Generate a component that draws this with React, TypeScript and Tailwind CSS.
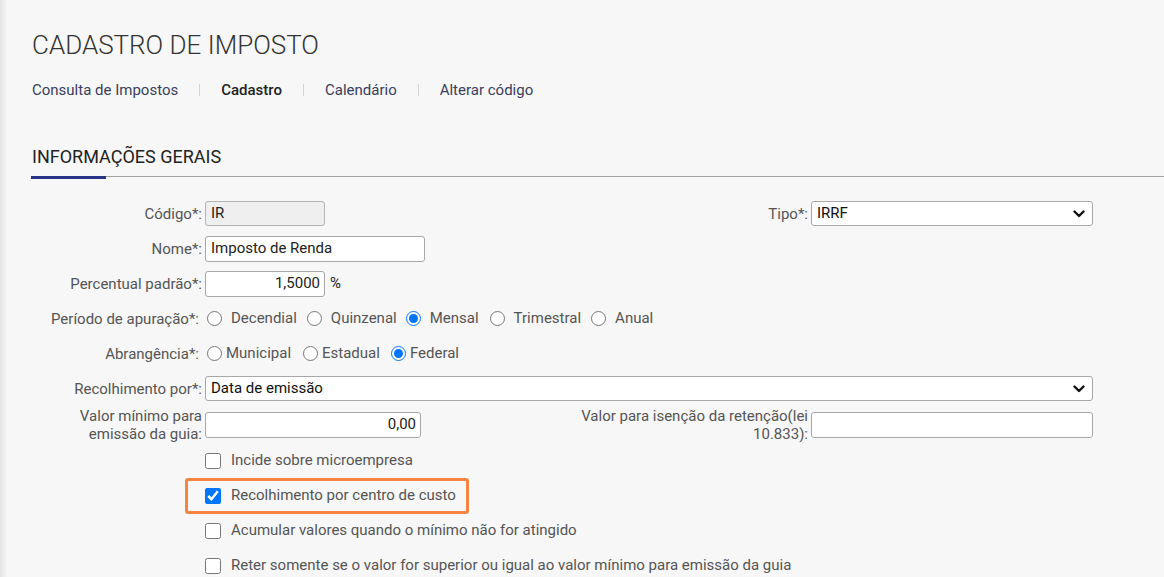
import React from "react";

function Chevron() {
  return (
    <svg width="12" height="8" viewBox="0 0 12 8" className="absolute right-[7px] top-1/2 -translate-y-1/2">
      <polyline points="1.5,1.5 6,6 10.5,1.5" fill="none" stroke="#111" strokeWidth="2.4" strokeLinecap="round" strokeLinejoin="round" />
    </svg>
  );
}

function Select({ value, width }: { value: string; width: string }) {
  return (
    <div className={`relative h-[25px] ${width} bg-white border border-[#a8a8a8] rounded-[3px] flex items-center pl-[5px] text-[#111]`}>
      {value}
      <Chevron />
    </div>
  );
}

function Label({ children, width = "w-[173px]" }: { children: React.ReactNode; width?: string }) {
  return <div className={`${width} shrink-0 pr-[3px] text-right text-[#555] leading-[18px]`}>{children}</div>;
}

function Radio({ label, checked, name, textGap, after }: { label: string; checked?: boolean; name: string; textGap: string; after: string }) {
  return (
    <label className={`flex items-center ${after}`}>
      <input type="radio" name={name} defaultChecked={checked} className="w-[15px] h-[15px] m-0 ml-[5px]" />
      <span className={`${textGap} text-[#555]`}>{label}</span>
    </label>
  );
}

function Check({ label, checked }: { label: string; checked?: boolean }) {
  return (
    <label className="flex items-center">
      <input type="checkbox" defaultChecked={checked} className="w-4 h-4 m-0" />
      <span className="ml-[10px] text-[#555]">{label}</span>
    </label>
  );
}

export default function App() {
  const navItems = ["Consulta de Impostos", "Cadastro", "Calendário", "Alterar código"];

  return (
    <div
      className="min-h-[577px] bg-[#f7f7f7] relative overflow-hidden text-[15px]"
      style={{ fontFamily: "Roboto, 'Liberation Sans', sans-serif" }}
    >
      <div className="absolute left-0 top-0 bottom-0 w-[7px] bg-gradient-to-r from-[#e4e4e4] to-transparent" />

      <div className="pl-[32px] pt-[29px]">
        <h1 className="text-[26px] leading-[32px] font-light text-[#333]">CADASTRO DE IMPOSTO</h1>

        <nav className="mt-[19px] flex items-center text-[15px] leading-[20px]">
          {navItems.map((item, i) => (
            <React.Fragment key={item}>
              {i > 0 && <span className="mx-[21px] w-px h-[12px] bg-[#d4d4d4]" />}
              <span className={i === 1 ? "font-medium text-[#222]" : "text-[#39405e]"}>{item}</span>
            </React.Fragment>
          ))}
        </nav>

        <h2 className="mt-[45px] text-[18px] leading-[24px] text-[#222] pb-[7px]">INFORMAÇÕES GERAIS</h2>
      </div>

      <div className="relative ml-[31px] h-px bg-[#a3a3a3]">
        <div className="absolute left-0 top-0 w-[75px] h-[3px] bg-[#2b3388]" />
      </div>

      <div className="ml-[32px] mt-[19px] w-[1061px] text-[#222]">
        <div className="h-[35px] flex items-center">
          <div className="w-[546px] flex items-center">
            <Label>Código*:</Label>
            <div className="h-[25px] w-[120px] bg-[#efefef] border border-[#b3b3b3] rounded-[3px] flex items-center px-[5px]">IR</div>
          </div>
          <div className="flex items-center">
            <Label width="w-[233px]">Tipo*:</Label>
            <Select value="IRRF" width="w-[282px]" />
          </div>
        </div>

        <div className="h-[35px] flex items-center">
          <Label>Nome*:</Label>
          <div className="h-[26px] w-[220px] bg-white border border-[#a8a8a8] rounded-[3px] flex items-center px-[5px]">Imposto de Renda</div>
        </div>

        <div className="h-[35px] flex items-center">
          <Label>Percentual padrão*:</Label>
          <div className="h-[26px] w-[120px] bg-white border border-[#a8a8a8] rounded-[3px] flex items-center justify-end px-[4px]">1,5000</div>
          <span className="ml-[5px]">%</span>
        </div>

        <div className="h-[35px] flex items-center">
          <Label width="w-[170px]">Período de apuração*:</Label>
          <Radio name="periodo" label="Decendial" textGap="ml-[9px]" after="mr-[5px]" />
          <Radio name="periodo" label="Quinzenal" textGap="ml-[9px]" after="mr-[4px]" />
          <Radio name="periodo" label="Mensal" checked textGap="ml-[9px]" after="mr-[6px]" />
          <Radio name="periodo" label="Trimestral" textGap="ml-[9px]" after="mr-[5px]" />
          <Radio name="periodo" label="Anual" textGap="ml-[9px]" after="" />
        </div>

        <div className="h-[35px] flex items-center">
          <Label width="w-[170px]">Abrangência*:</Label>
          <Radio name="abr" label="Municipal" textGap="ml-[4px]" after="mr-[7px]" />
          <Radio name="abr" label="Estadual" textGap="ml-[4px]" after="mr-[6px]" />
          <Radio name="abr" label="Federal" checked textGap="ml-[4px]" after="" />
        </div>

        <div className="h-[35px] flex items-center">
          <Label>Recolhimento por*:</Label>
          <Select value="Data de emissão" width="w-[888px]" />
        </div>

        <div className="h-[37px] flex items-center">
          <div className="w-[546px] flex items-center">
            <Label>
              Valor mínimo para
              <br />
              emissão da guia:
            </Label>
            <div className="h-[26px] w-[216px] bg-white border border-[#a8a8a8] rounded-[3px] flex items-center justify-end px-[4px]">0,00</div>
          </div>
          <div className="flex items-center">
            <Label width="w-[233px]">
              Valor para isenção da retenção(lei
              <br />
              10.833):
            </Label>
            <div className="h-[26px] w-[282px] bg-white border border-[#a8a8a8] rounded-[3px]" />
          </div>
        </div>

        <div className="flex flex-col">
          <div className="h-[35px] flex items-center pl-[173px]">
            <Check label="Incide sobre microempresa" />
          </div>
          <div className="h-[35px] flex items-center">
            <div className="ml-[153px] w-[284px] h-[36px] border-[3px] border-[#f7843f] rounded-[3px] flex items-center pl-[17px]">
              <Check label="Recolhimento por centro de custo" checked />
            </div>
          </div>
          <div className="h-[35px] flex items-center pl-[173px]">
            <Check label="Acumular valores quando o mínimo não for atingido" />
          </div>
          <div className="h-[35px] flex items-center pl-[173px]">
            <Check label="Reter somente se o valor for superior ou igual ao valor mínimo para emissão da guia" />
          </div>
        </div>
      </div>
    </div>
  );
}
